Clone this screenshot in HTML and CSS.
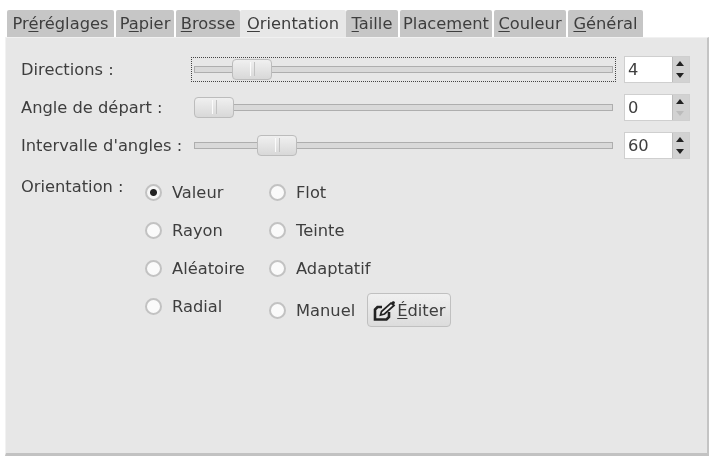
FILE: index.html
```html
<!DOCTYPE html>
<html>
<head>
    <meta charset="utf-8">
    <title>Orientation</title>
    <link rel="stylesheet" href="styles.css">
</head>
<body>
    <div class="tabs">
        <div class="tab">Pr<u>é</u>réglages</div>
        <div class="tab">P<u>a</u>pier</div>
        <div class="tab"><u>B</u>rosse</div>
        <div class="tab active"><u>O</u>rientation</div>
        <div class="tab"><u>T</u>aille</div>
        <div class="tab">Place<u>m</u>ent</div>
        <div class="tab"><u>C</u>ouleur</div>
        <div class="tab"><u>G</u>énéral</div>
    </div>
    <div class="panel">
        <div class="slider-row">
            <label>Directions :</label>
            <div class="slider focused">
                <div class="track"></div>
                <div class="thumb thumb-dir"><span></span></div>
            </div>
            <div class="spin">
                <div class="spin-value">4</div>
                <div class="spin-btns"><i class="up"></i><i class="down"></i></div>
            </div>
        </div>
        <div class="slider-row">
            <label>Angle de départ :</label>
            <div class="slider">
                <div class="track"></div>
                <div class="thumb thumb-angle"><span></span></div>
            </div>
            <div class="spin">
                <div class="spin-value">0</div>
                <div class="spin-btns"><i class="up"></i><i class="down off"></i></div>
            </div>
        </div>
        <div class="slider-row">
            <label>Intervalle d'angles :</label>
            <div class="slider">
                <div class="track"></div>
                <div class="thumb thumb-range"><span></span></div>
            </div>
            <div class="spin">
                <div class="spin-value">60</div>
                <div class="spin-btns"><i class="up"></i><i class="down"></i></div>
            </div>
        </div>
        <div class="orient">
            <div class="orient-label">Orientation :</div>
            <div class="radios">
                <div class="radio on">Valeur</div>
                <div class="radio">Flot</div>
                <div class="radio">Rayon</div>
                <div class="radio">Teinte</div>
                <div class="radio">Aléatoire</div>
                <div class="radio">Adaptatif</div>
                <div class="radio">Radial</div>
                <div class="manual">
                    <div class="radio">Manuel</div>
                    <button class="edit">
                        <svg width="23" height="21" viewBox="0 0 23 21">
                            <path d="M9 7H4.5L2 9.5V19.5H13.5L16 17V12" fill="none" stroke="#222" stroke-width="2.6"/>
                            <path d="M7.5 15L8.5 11.5L18 3L21 5.5L11.5 14Z" fill="#eee" stroke="#222" stroke-width="1.7"/>
                            <path d="M18 3L21 5.5L22 2L20 1Z" fill="#222"/>
                        </svg>
                        <span><u>É</u>diter</span>
                    </button>
                </div>
            </div>
        </div>
    </div>
</body>
</html>
```

FILE: styles.css
```css
html, body {
    margin: 0;
    padding: 0;
}
body {
    width: 712px;
    height: 456px;
    background: #fff;
    font-family: "DejaVu Sans", sans-serif;
    font-size: 16.3px;
    color: #3e3e3e;
    overflow: hidden;
    padding-top: 10px;
    box-sizing: border-box;
    filter: blur(0.6px);
}
u {
    text-underline-offset: 2px;
}
.tabs {
    display: flex;
    height: 27px;
    padding-left: 7px;
}
.tab {
    margin-right: 2px;
    line-height: 28px;
    text-align: center;
    background: #c6c6c6;
    border-radius: 2px 2px 0 0;
    white-space: nowrap;
}
.tab:nth-child(1) { width: 107px; }
.tab:nth-child(2) { width: 58px; }
.tab:nth-child(3) { width: 64px; margin-right: 0; }
.tab:nth-child(4) { width: 106px; margin-right: 0; }
.tab:nth-child(5) { width: 52px; }
.tab:nth-child(6) { width: 92px; }
.tab:nth-child(7) { width: 72px; }
.tab:nth-child(8) { width: 75px; }
.tab.active {
    background: #e7e7e7;
}
.panel {
    box-sizing: border-box;
    height: 419px;
    margin: 0 3px 0 5px;
    padding: 12px 17px 0 15px;
    background: #e7e7e7;
    border-top: 1px solid #f1f1f1;
    border-right: 2px solid #c4c4c4;
    border-bottom: 3px solid #c2c2c2;
    border-left: 1px solid #f2f2f2;
}
.slider-row {
    display: flex;
    align-items: center;
    height: 38px;
}
.slider-row label {
    width: 170px;
    flex: none;
}
.slider {
    position: relative;
    flex: 1;
    height: 25px;
    margin-right: 8px;
    display: flex;
    align-items: center;
}
.slider.focused {
    outline: 1px dotted #444;
    outline-offset: -1px;
}
.track {
    flex: 1;
    height: 7px;
    margin: 0 3px;
    background: #d9d9d9;
    border: 1px solid #aeaeae;
    box-sizing: border-box;
}
.thumb {
    position: absolute;
    top: 2px;
    box-sizing: border-box;
    width: 40px;
    height: 21px;
    background: linear-gradient(#f0f0f0, #d8d8d8);
    border: 1px solid #bcbcbc;
    border-radius: 4px;
    display: flex;
    align-items: center;
    justify-content: center;
}
.thumb span {
    width: 3px;
    height: 14px;
    border-left: 1px solid #fbfbfb;
    border-right: 1px solid #c2c2c2;
}
.thumb-dir { left: 41px; }
.thumb-angle { left: 3px; }
.thumb-range { left: 66px; }
.spin {
    width: 66px;
    height: 27px;
    flex: none;
    display: flex;
    box-sizing: border-box;
    background: #fff;
    border: 1px solid #cfcfcf;
}
.spin-value {
    flex: 1;
    padding-left: 3px;
    line-height: 25px;
}
.spin-btns {
    width: 16px;
    display: flex;
    flex-direction: column;
    background: #d2d2d2;
    border-left: 1px solid #bdbdbd;
}
.spin-btns i {
    flex: 1;
    position: relative;
}
.spin-btns i::after {
    content: "";
    position: absolute;
    left: 3px;
    top: 4px;
    border-left: 4px solid transparent;
    border-right: 4px solid transparent;
}
.spin-btns .up::after {
    border-bottom: 5px solid #222;
}
.spin-btns .down::after {
    border-top: 5px solid #222;
}
.spin-btns .off::after {
    border-top-color: #bcbcbc;
}
.orient {
    display: flex;
    margin-top: 13px;
}
.orient-label {
    width: 124px;
    flex: none;
}
.radios {
    display: grid;
    grid-template-columns: 124px auto;
    grid-auto-rows: 38px;
    justify-content: start;
    padding-top: 3px;
}
.radio {
    display: flex;
    align-items: center;
    gap: 10px;
    height: 24px;
    white-space: nowrap;
}
.radio::before {
    content: "";
    box-sizing: border-box;
    width: 17px;
    height: 17px;
    flex: none;
    background: #fafafa;
    border: 2px solid #c2c2c2;
    border-radius: 50%;
}
.radio.on::before {
    background: radial-gradient(circle, #222 0 3px, #f6f6f6 4px);
}
.manual {
    display: flex;
    align-items: center;
    align-self: start;
    gap: 12px;
    margin-top: -1px;
}
.edit {
    display: flex;
    align-items: center;
    gap: 1px;
    height: 34px;
    padding: 0 5px 0 5px;
    font: inherit;
    color: inherit;
    background: linear-gradient(#f0f0f0, #dcdcdc);
    border: 1px solid #c0c0c0;
    border-radius: 4px;
}
```
